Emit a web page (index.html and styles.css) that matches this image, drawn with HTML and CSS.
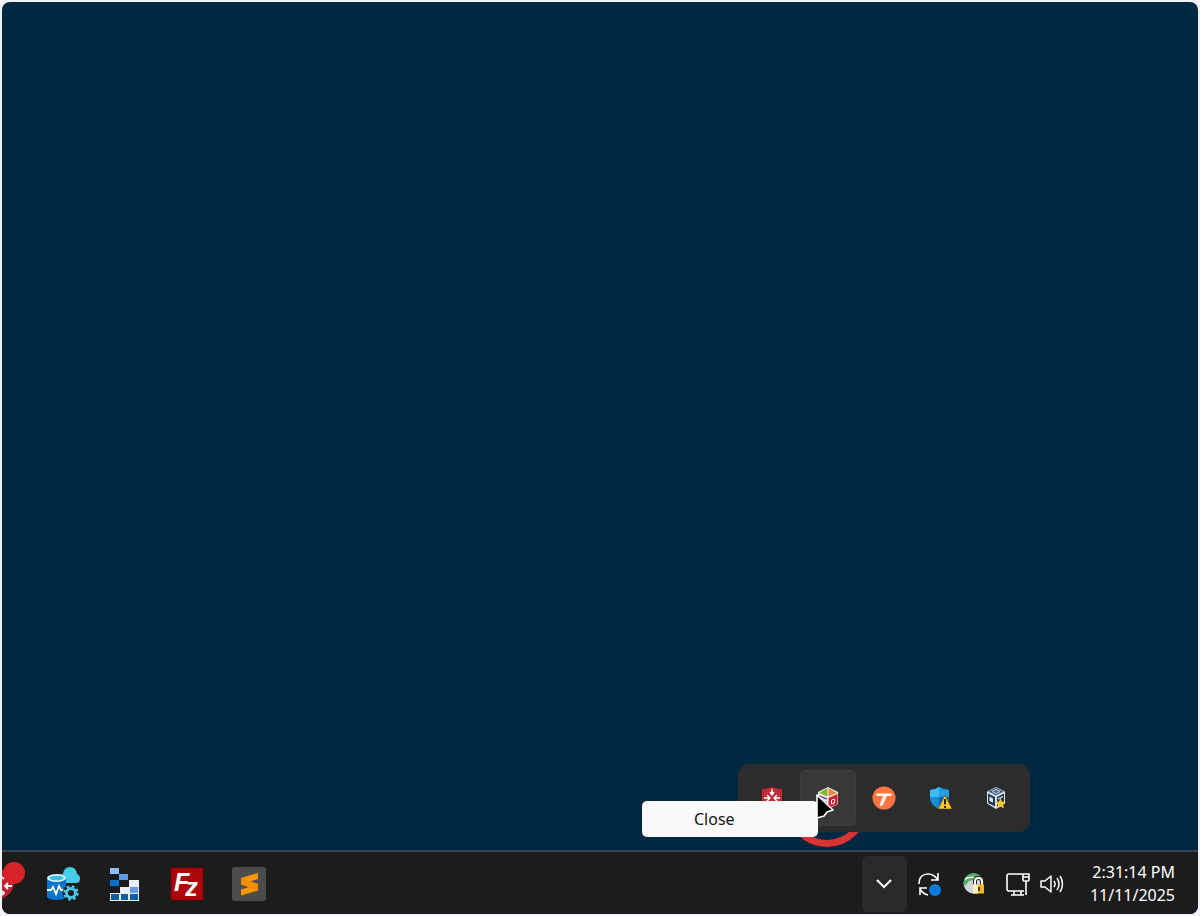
FILE: index.html
```html
<!DOCTYPE html>
<html lang="en">
<head>
<meta charset="utf-8">
<title>Desktop</title>
<link rel="stylesheet" href="styles.css">
</head>
<body>
<div class="screen">
  <main class="desktop">
    <div class="click-ring"></div>
    <section class="flyout" aria-label="Hidden icons">
      <button class="flyout-item" aria-label="Connection client">
        <svg width="24" height="24" viewBox="0 0 24 24"><path d="M2 3Q8 3 12 1q4 2 10 2v15l-10 5-10-5z" fill="#c02a36"/><path d="M12 3v6M4 12h6M20 12h-6M12 22v-7M10 6l2 3 2-3M7 9l3 3-3 3M17 9l-3 3 3 3" stroke="#fff" stroke-width="1.4" fill="none"/></svg>
      </button>
      <button class="flyout-item is-active" aria-label="Package tool">
        <svg width="24" height="24" viewBox="0 0 24 24"><path d="M12 1l10 5v12l-10 5-10-5V6z" fill="#f4f0f0"/><path d="M11.500 2v8.500L3 7z" fill="#7fb832"/><path d="M12.500 2v8.500L21 7z" fill="#f08a3c"/><path d="M3 9l8 3v9l-8-4z" fill="#f2edf5"/><path d="M3 10l8 3M3 14l8 3" stroke="#7b4b9c" stroke-width="1.500"/><path d="M12.500 12l9-4v10l-9 4z" fill="#d9182d"/><path d="M15.500 14l3-1v4l-3 1z" fill="none" stroke="#fff"/></svg>
      </button>
      <button class="flyout-item" aria-label="Tabby">
        <svg width="24" height="24" viewBox="0 0 24 24"><circle cx="12" cy="12" r="11.5" fill="#fb7442"/><path d="M5 7.500h14q1.500 0 1 1-.6 1.500-2 1.500h-3l-4 8.500q-.5 1.500-2 1.500-1.700 0-1.200-1.400L11 10H6.500Q4 10 4 8.500 4 7.500 5 7.500z" fill="#fff5ed"/></svg>
      </button>
      <button class="flyout-item" aria-label="Windows Security">
        <svg width="26" height="26" viewBox="0 0 26 26"><path d="M3 5q5 0 9-3 5 3 10 3v7q0 8-10 12Q3 20 3 12z" fill="#168dd9"/><path d="M3 5q5 0 9-3v10H3z" fill="#3bbcf4"/><path d="M12 2q5 3 10 3v7H12z" fill="#239de5"/><path d="M12 12h10q0 8-10 12z" fill="#0b67b4"/><path d="M18 10l7 14H11z" fill="#fdc52c" stroke="#594313" stroke-width=".6"/><path d="M18 14v5.500M18 21v2" stroke="#2b2414" stroke-width="2"/></svg>
      </button>
      <button class="flyout-item" aria-label="VirtualBox">
        <svg width="24" height="24" viewBox="0 0 24 24"><path d="M12 1l9 4.500v12L12 23l-9-5.500v-12z" fill="#d9e2ee"/><path d="M12 1.500l8 4-8 4-8-4z" fill="#50647e"/><path d="M8 5.500l4-2 4 2-4 2z" fill="none" stroke="#c5d3e3"/><path d="M4 7.500l7 3.500v9.500L4 17z" fill="#243955"/><path d="M5.500 10.500L9 12.500v4L5.500 15z" fill="#dce6f5"/><path d="M13 11l7-3.500v9.500l-7 4z" fill="#1d2f4b"/><path d="M14 13l5-2.500" stroke="#b3c7df" stroke-width="1.500"/><path d="M16.500 12l1.500 3.500 4 .5-3 2.500 1 4-3.500-2-3.500 2 1-4-3-2.500 4-.5z" fill="#ffc52f"/></svg>
      </button>
    </section>
    <div class="context-menu" role="menu"><button class="menu-item" role="menuitem">Close</button></div>
    <svg class="cursor" width="20" height="28" viewBox="0 0 20 28"><path d="M1 1l16 15-6 2-3 4-7 2z" fill="#000" stroke="#fff" stroke-width="1.600" stroke-linejoin="round"/></svg>
  </main>
  <footer class="taskbar">
    <nav class="apps" aria-label="Apps">
      <button class="app app-cut" aria-label="Connection client">
        <svg width="24" height="44" viewBox="0 0 24 44"><path d="M0 8h12v15Q10 32 0 37z" fill="#be1f2d"/><path d="M10 24H3M6 21l-3 3 3 3M0 15l2 2M0 33l2-2-2-2" stroke="#fff" stroke-width="1.800" fill="none"/><circle cx="12" cy="11" r="11" fill="#d72327"/></svg>
      </button>
      <button class="app" aria-label="Cloud data monitor">
        <svg width="36" height="36" viewBox="0 0 36 36"><path d="M18 17q-4-1-4-5 0-4 4-4 1-7 7-7 6 0 7 7 3 1 3 4.500 0 4.500-4 4.500z" fill="#43cde8"/><path d="M2 12v19q2 3 10 3 7 0 9-3V12z" fill="#0874cb"/><ellipse cx="11.500" cy="12" rx="9.500" ry="4" fill="#d9f3fa"/><ellipse cx="11.500" cy="12" rx="7" ry="2.300" fill="#38bfe1"/><path d="M2 24h4l2-3 3 7 3-8 2 4h3" fill="none" stroke="#fff" stroke-width="1.800"/><circle cx="26" cy="27" r="8.500" fill="#1c1c1c"/><circle cx="26" cy="27" r="4.500" fill="none" stroke="#4ac4e5" stroke-width="3"/><circle cx="26" cy="27" r="6.500" fill="none" stroke="#4ac4e5" stroke-width="2.500" stroke-dasharray="2.600 2.500"/></svg>
      </button>
      <button class="app" aria-label="Blocks">
        <svg width="32" height="36" viewBox="0 0 32 36"><path d="M1 2h9v6H1z" fill="#8dbcf5"/><path d="M10 8h9v6h-9z" fill="#6099e5"/><path d="M1 14h9v6H1z" fill="#0872cb"/><path d="M20 14h10v21H1v-8h10v-6h9z" fill="#e9effa"/><path d="M21 21h8v6h-8z" fill="#6599e8"/><path d="M2 28h8v6H2zM12 28h7v6h-7zM21 28h8v6h-8z" fill="#0b5fa5"/></svg>
      </button>
      <button class="app" aria-label="FileZilla">
        <svg width="34" height="34" viewBox="0 0 34 34"><rect x="1" y="1" width="32" height="32" fill="#ad0608" stroke="#7b0004" stroke-width="1" stroke-dasharray="2 1"/><text class="logo-fz" x="4" y="24">F<tspan dx="-4" dy="5">z</tspan></text></svg>
      </button>
      <button class="app" aria-label="Sublime Text">
        <svg width="34" height="34" viewBox="0 0 34 34"><rect width="34" height="34" rx="2" fill="#4c4c4c"/><path d="M9 11l17-5v6l-8 2.500 8 2.500v6.500L9 28.500v-6l8-2.500-8-2.500z" fill="#ff9800"/><path d="M9 17.500v-6.500l17 6v6.500z" fill="#f58d00"/></svg>
      </button>
    </nav>
    <div class="tray">
      <button class="chevron" aria-label="Show hidden icons"><svg width="18" height="12" viewBox="0 0 18 12"><path d="M2 2l7 7 7-7" fill="none" stroke="#fff" stroke-width="2"/></svg></button>
      <button class="tray-icon" aria-label="Updates">
        <svg width="24" height="26" viewBox="0 0 24 26"><path d="M2 13C2 6 6 3 11 3q6 0 10 6M21 2v7h-7M11 24q-5-1-8-6M3 24v-7h7" fill="none" stroke="#fff" stroke-width="1.600"/><circle cx="18" cy="19" r="6" fill="#087bdc"/></svg>
      </button>
      <button class="tray-icon" aria-label="VPN">
        <svg width="24" height="26" viewBox="0 0 24 26"><circle cx="11.500" cy="12.500" r="10" fill="#cfd5d9"/><path d="M2 10q2-7 9-8 7 0 9 6l-6-1-3 2-4 1-4 5q-2-2-1-5z" fill="#53ac60"/><path d="M3 8q5-3 10-1" fill="none" stroke="#edf5ed" stroke-width="1.500"/><path d="M13 14v-4q0-3 3.500-3 3.500 0 3.500 3v4" fill="none" stroke="#242424" stroke-width="4"/><path d="M13 14v-4q0-3 3.500-3 3.500 0 3.500 3v4" fill="none" stroke="#fff" stroke-width="2"/><path d="M11 13.500h11v9H11z" fill="#f4b91f"/><path d="M11 13.500h5v9h-5z" fill="#fff0c5"/><path d="M17 16v4" stroke="#51390b" stroke-width="2"/></svg>
      </button>
      <button class="status" aria-label="Network and volume">
        <svg width="24" height="26" viewBox="0 0 24 26"><path d="M17 3H3Q1 3 1 5v13q0 2 2 2h15M8 20v4m7-4v4M5 24h13M17 3h6v6q0 1-1 1h-4q-1 0-1-1zM17 6h6M20 10v14" fill="none" stroke="#fff" stroke-width="1.600"/></svg>
        <svg width="24" height="26" viewBox="0 0 24 26"><path d="M1 10h4l6-5v16l-6-5H1zM14 10q2 3 0 6M17 7q4 6 0 12M20 5q5 8 0 16" fill="none" stroke="#fff" stroke-width="1.500" stroke-linejoin="round"/></svg>
      </button>
      <button class="clock"><span>2:31:14 PM</span><span>11/11/2025</span></button>
    </div>
  </footer>
</div>
</body>
</html>
```
FILE: styles.css
```css
* { box-sizing: border-box; }
body { margin: 0; background: #f0f2f8; font-family: "Noto Sans", "Open Sans", sans-serif; }
button { margin: 0; padding: 0; border: 0; background: none; color: inherit; font: inherit; }
svg { display: block; flex: none; }
.screen { display: flex; flex-direction: column; min-height: calc(100vh - 4px); margin: 2px; border-radius: 8px; overflow: hidden; background: #002840; }
.desktop { position: relative; flex: 1; }
.click-ring { position: absolute; right: 330px; bottom: 3px; width: 82px; height: 82px; border: 7px solid #d83333; border-radius: 50%; }
.flyout { position: absolute; right: 168px; bottom: 18px; display: flex; padding: 5px; border: 1px solid #292d30; border-radius: 11px; background: #2c2c2c; }
.flyout-item { display: flex; align-items: center; justify-content: center; width: 56px; height: 56px; border-radius: 5px; }
.is-active { background: #383838; box-shadow: inset 0 0 0 1px #3d3d3d; }
.context-menu { position: absolute; right: 380px; bottom: 13px; width: 176px; border-radius: 5px; background: #f9f9f9; overflow: hidden; }
.menu-item { display: block; width: 100%; height: 36px; padding-left: 52px; text-align: left; font-size: 16px; line-height: 36px; color: #151515; }
.cursor { position: absolute; right: 362px; bottom: 28px; }
.taskbar { display: flex; align-items: center; justify-content: space-between; height: 64px; padding-top: 2px; border-top: 2px solid #34434d; background: #1c1c1c; color: #fff; }
.apps { display: flex; align-items: center; }
.app { display: flex; align-items: center; justify-content: center; width: 62px; height: 52px; }
.app-cut { width: 30px; justify-content: flex-start; }
.tray { display: flex; align-items: center; padding-right: 23px; }
.chevron { display: flex; align-items: center; justify-content: center; width: 45px; height: 56px; border-radius: 6px; background: #2a2a2a; }
.tray-icon { display: flex; align-items: center; justify-content: center; width: 45px; height: 56px; }
.status { display: flex; gap: 10px; padding: 0 26px 0 9px; }
.clock { display: flex; flex-direction: column; align-items: flex-end; font-size: 16px; line-height: 23px; }
.logo-fz { fill: #fff; font-family: "Liberation Sans", Arial, sans-serif; font-size: 25px; font-style: italic; font-weight: bold; }
```
